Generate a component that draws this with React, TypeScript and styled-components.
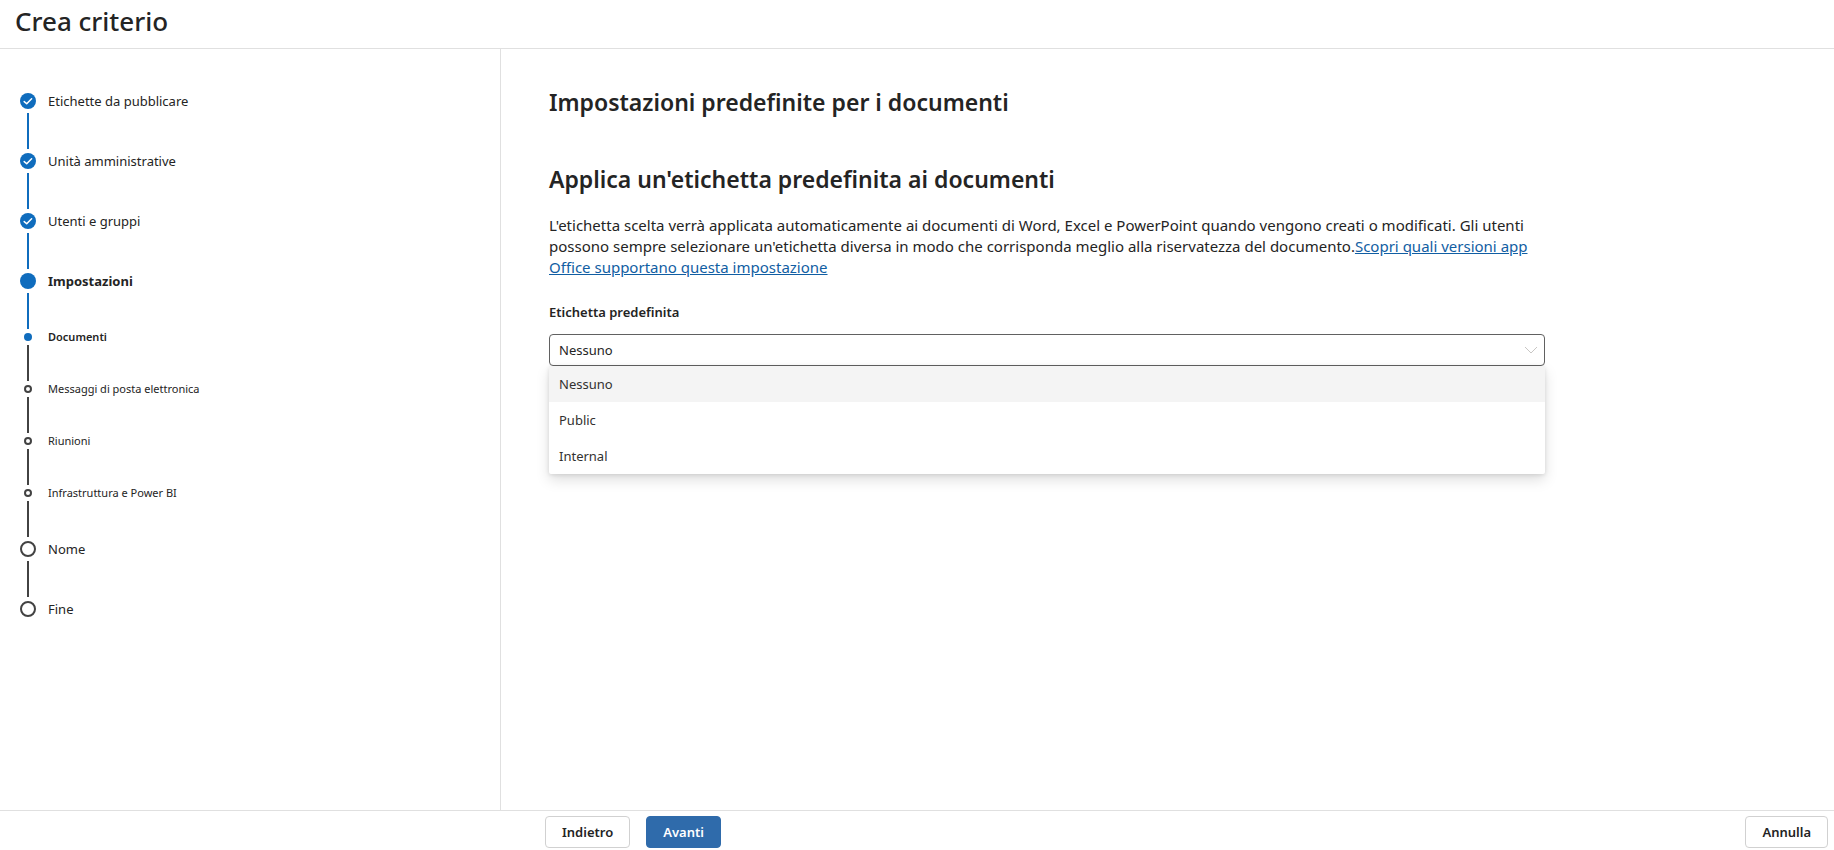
import React, { useState } from 'react';
import styled, { createGlobalStyle, css } from 'styled-components';

const color = {
  text: '#242424',
  line: '#e0e0e0',
  brand: '#0f6cbd',
  button: '#2f6bab',
  pending: '#424242',
  link: '#115ea3',
};

const GlobalStyle = createGlobalStyle`
  *, *::before, *::after { box-sizing: border-box; }
  body {
    margin: 0;
    background: #fff;
    color: ${color.text};
    font-family: "Segoe UI", "Noto Sans", "Open Sans", sans-serif;
    font-size: 13px;
  }
  button, select { font: inherit; color: inherit; }
`;

const Page = styled.div`
  display: flex;
  flex-direction: column;
  min-height: 100vh;
`;

const Header = styled.header`
  padding: 3px 15px 9px;
  border-bottom: 1px solid ${color.line};
`;

const Title = styled.h1`
  margin: 0;
  font-size: 26px;
  font-weight: 500;
  line-height: 36px;
`;

const Body = styled.div`
  display: flex;
  flex: 1;
`;

const Sidebar = styled.nav`
  flex: 0 0 501px;
  padding: 44px 20px;
  border-right: 1px solid ${color.line};
`;

const StepList = styled.ol`
  margin: 0;
  padding: 0;
  list-style: none;
`;

type StepState = 'done' | 'current' | 'pending';

const StepItem = styled.li`
  display: flex;
  gap: 12px;
`;

const Track = styled.div`
  display: flex;
  flex-direction: column;
  align-items: center;
  width: 16px;
`;

const Marker = styled.span<{ $state: StepState; $sub?: boolean }>`
  display: flex;
  width: ${p => (p.$sub ? 8 : 16)}px;
  height: ${p => (p.$sub ? 8 : 16)}px;
  border-radius: 50%;
  ${p =>
    p.$state === 'pending'
      ? css`border: 2px solid ${color.pending};`
      : css`background: ${color.brand};`}
`;

const Connector = styled.span<{ $state: StepState; $sub?: boolean }>`
  width: 2px;
  height: 36px;
  margin: 4px 0;
  background: ${p =>
    p.$state === 'pending' || p.$sub ? color.pending : color.brand};
`;

const StepLabel = styled.span<{ $current: boolean; $sub?: boolean }>`
  font-size: ${p => (p.$sub ? 11 : 13)}px;
  line-height: ${p => (p.$sub ? 8 : 16)}px;
  font-weight: ${p => (p.$current ? (p.$sub ? 600 : 700) : 400)};
`;

const Main = styled.main`
  flex: 1;
  min-width: 0;
  padding: 37px 48px 48px;
`;

const Content = styled.div`
  max-width: 996px;
`;

const Heading = styled.h2`
  margin: 0 0 45px;
  font-size: 23px;
  font-weight: 600;
  line-height: 32px;
`;

const SubHeading = styled(Heading)`
  margin-bottom: 20px;
`;

const Description = styled.p`
  margin: 0 0 24px;
  font-size: 15px;
  line-height: 21px;
`;

const Link = styled.a`
  color: ${color.link};
  text-decoration: underline;
`;

const FieldLabel = styled.label`
  display: block;
  margin-bottom: 12px;
  font-weight: 600;
  line-height: 20px;
`;

const Dropdown = styled.div`
  position: relative;
`;

const Select = styled.select`
  display: block;
  width: 100%;
  height: 32px;
  padding: 0 9px;
  border: 1px solid #616161;
  border-radius: 4px;
  background: #fff;
  appearance: none;
  outline: none;
`;

const Chevron = styled.svg`
  position: absolute;
  top: 12px;
  right: 7px;
  pointer-events: none;
`;

const Menu = styled.div`
  position: absolute;
  top: 100%;
  left: 0;
  right: 0;
  border-radius: 0 0 2px 2px;
  background: #fff;
  box-shadow: 0 6px 14px rgba(0, 0, 0, 0.13), 0 1px 4px rgba(0, 0, 0, 0.11);
`;

const Option = styled.button<{ $selected: boolean }>`
  display: block;
  width: 100%;
  height: 36px;
  padding: 0 10px;
  border: 0;
  background: ${p => (p.$selected ? '#f4f4f4' : 'transparent')};
  color: #323130;
  text-align: left;
`;

const Footer = styled.footer`
  display: flex;
  gap: 16px;
  padding: 5px 6px 2px 545px;
  border-top: 1px solid ${color.line};
`;

const Button = styled.button<{ $primary?: boolean }>`
  height: 32px;
  padding: 0 16px;
  border: 1px solid ${p => (p.$primary ? color.button : '#d1d1d1')};
  border-radius: 4px;
  background: ${p => (p.$primary ? color.button : '#fff')};
  color: ${p => (p.$primary ? '#fff' : color.text)};
  font-weight: 600;
`;

const CancelButton = styled(Button)`
  margin-left: auto;
`;

interface Step {
  label: string;
  state: StepState;
  sub?: boolean;
}

const steps: Step[] = [
  { label: 'Etichette da pubblicare', state: 'done' },
  { label: 'Unità amministrative', state: 'done' },
  { label: 'Utenti e gruppi', state: 'done' },
  { label: 'Impostazioni', state: 'current' },
  { label: 'Documenti', state: 'current', sub: true },
  { label: 'Messaggi di posta elettronica', state: 'pending', sub: true },
  { label: 'Riunioni', state: 'pending', sub: true },
  { label: 'Infrastruttura e Power BI', state: 'pending', sub: true },
  { label: 'Nome', state: 'pending' },
  { label: 'Fine', state: 'pending' },
];

const options = ['Nessuno', 'Public', 'Internal'];

const CheckIcon = () => (
  <svg width="16" height="16" viewBox="0 0 16 16" fill="none" aria-hidden="true">
    <path
      d="M4.2 8.6 L6.7 10.7 L11.6 5.7"
      stroke="#fff"
      strokeWidth="1.5"
      strokeLinecap="round"
      strokeLinejoin="round"
    />
  </svg>
);

export default function App() {
  const [value, setValue] = useState(options[0]);

  return (
    <>
      <GlobalStyle />
      <Page>
        <Header>
          <Title>Crea criterio</Title>
        </Header>
        <Body>
          <Sidebar aria-label="Passaggi">
            <StepList>
              {steps.map((step, i) => (
                <StepItem
                  key={step.label}
                  aria-current={step.state === 'current' ? 'step' : undefined}
                >
                  <Track>
                    <Marker $state={step.state} $sub={step.sub}>
                      {step.state === 'done' && <CheckIcon />}
                    </Marker>
                    {i < steps.length - 1 && (
                      <Connector $state={step.state} $sub={step.sub} />
                    )}
                  </Track>
                  <StepLabel $current={step.state === 'current'} $sub={step.sub}>
                    {step.label}
                  </StepLabel>
                </StepItem>
              ))}
            </StepList>
          </Sidebar>
          <Main>
            <Content>
              <Heading>Impostazioni predefinite per i documenti</Heading>
              <SubHeading>Applica un'etichetta predefinita ai documenti</SubHeading>
              <Description>
                L'etichetta scelta verrà applicata automaticamente ai documenti di Word,
                Excel e PowerPoint quando vengono creati o modificati. Gli utenti possono
                sempre selezionare un'etichetta diversa in modo che corrisponda meglio alla
                riservatezza del documento.
                <Link href="#versioni">
                  Scopri quali versioni app Office supportano questa impostazione
                </Link>
              </Description>
              <FieldLabel htmlFor="default-label">Etichetta predefinita</FieldLabel>
              <Dropdown>
                <Select
                  id="default-label"
                  value={value}
                  onChange={e => setValue(e.target.value)}
                >
                  {options.map(o => (
                    <option key={o}>{o}</option>
                  ))}
                </Select>
                <Chevron width="14" height="8" viewBox="0 0 14 8" fill="none" aria-hidden="true">
                  <path d="M1 1 L7 7 L13 1" stroke="#c8c6c4" strokeWidth="1" />
                </Chevron>
                <Menu role="listbox" aria-label="Etichetta predefinita">
                  {options.map(o => (
                    <Option
                      key={o}
                      type="button"
                      role="option"
                      aria-selected={o === value}
                      $selected={o === value}
                      onClick={() => setValue(o)}
                    >
                      {o}
                    </Option>
                  ))}
                </Menu>
              </Dropdown>
            </Content>
          </Main>
        </Body>
        <Footer>
          <Button type="button">Indietro</Button>
          <Button type="button" $primary>
            Avanti
          </Button>
          <CancelButton type="button">Annulla</CancelButton>
        </Footer>
      </Page>
    </>
  );
}
